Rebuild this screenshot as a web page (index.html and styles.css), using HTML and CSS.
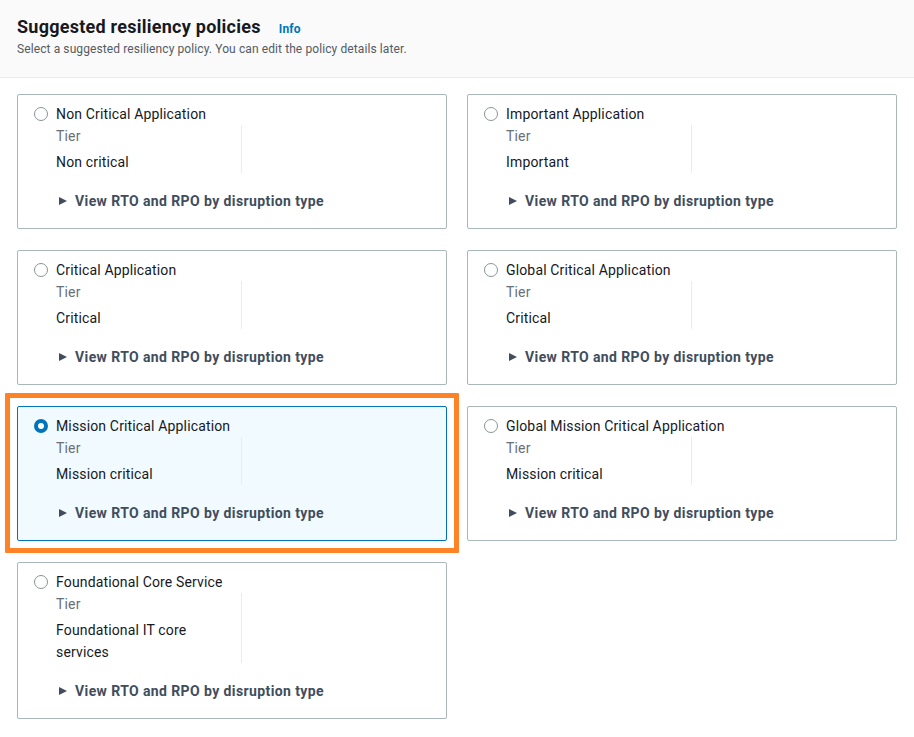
FILE: index.html
```html
<!DOCTYPE html>
<html>
<head>
<meta charset="utf-8">
<link rel="stylesheet" href="styles.css">
</head>
<body>
<header class="header">
  <div class="title-row">
    <h2 class="title">Suggested resiliency policies</h2>
    <a class="info">Info</a>
  </div>
  <p class="subtitle">Select a suggested resiliency policy. You can edit the policy details later.</p>
</header>
<main class="grid">
  <div class="card">
    <div class="card-head"><span class="radio"></span><span class="card-title">Non Critical Application</span></div>
    <div class="cols"><div class="col"><div class="label">Tier</div><div class="value">Non critical</div></div><div class="col"></div></div>
    <div class="expander"><span class="tri"></span>View RTO and RPO by disruption type</div>
  </div>
  <div class="card">
    <div class="card-head"><span class="radio"></span><span class="card-title">Important Application</span></div>
    <div class="cols"><div class="col"><div class="label">Tier</div><div class="value">Important</div></div><div class="col"></div></div>
    <div class="expander"><span class="tri"></span>View RTO and RPO by disruption type</div>
  </div>
  <div class="card">
    <div class="card-head"><span class="radio"></span><span class="card-title">Critical Application</span></div>
    <div class="cols"><div class="col"><div class="label">Tier</div><div class="value">Critical</div></div><div class="col"></div></div>
    <div class="expander"><span class="tri"></span>View RTO and RPO by disruption type</div>
  </div>
  <div class="card">
    <div class="card-head"><span class="radio"></span><span class="card-title">Global Critical Application</span></div>
    <div class="cols"><div class="col"><div class="label">Tier</div><div class="value">Critical</div></div><div class="col"></div></div>
    <div class="expander"><span class="tri"></span>View RTO and RPO by disruption type</div>
  </div>
  <div class="card selected">
    <div class="highlight"></div>
    <div class="card-head"><span class="radio checked"></span><span class="card-title">Mission Critical Application</span></div>
    <div class="cols"><div class="col"><div class="label">Tier</div><div class="value">Mission critical</div></div><div class="col"></div></div>
    <div class="expander"><span class="tri"></span>View RTO and RPO by disruption type</div>
  </div>
  <div class="card">
    <div class="card-head"><span class="radio"></span><span class="card-title">Global Mission Critical Application</span></div>
    <div class="cols"><div class="col"><div class="label">Tier</div><div class="value">Mission critical</div></div><div class="col"></div></div>
    <div class="expander"><span class="tri"></span>View RTO and RPO by disruption type</div>
  </div>
  <div class="card">
    <div class="card-head"><span class="radio"></span><span class="card-title">Foundational Core Service</span></div>
    <div class="cols"><div class="col"><div class="label">Tier</div><div class="value">Foundational IT core services</div></div><div class="col"></div></div>
    <div class="expander"><span class="tri"></span>View RTO and RPO by disruption type</div>
  </div>
</main>
</body>
</html>
```

FILE: styles.css
```css
* { box-sizing: border-box; }
html, body { margin: 0; padding: 0; background: #fff; }
body {
  font-family: Roboto, "Liberation Sans", sans-serif;
  color: #16191f;
  font-size: 14px;
  line-height: 22px;
  letter-spacing: 0.15px;
}
.header {
  background: #fafafa;
  border-bottom: 1px solid #e9ebed;
  padding: 15px 17px 20px;
  height: 78px;
}
.title-row { display: flex; align-items: baseline; gap: 18px; }
.title {
  margin: 0;
  font-size: 18px;
  line-height: 24px;
  font-weight: 700;
  color: #16191f;
  letter-spacing: 0.25px;
}
.info {
  font-size: 12px;
  font-weight: 700;
  color: #0073bb;
  text-decoration: none;
  letter-spacing: 0.2px;
}
.subtitle {
  margin: 1px 0 0;
  font-size: 12px;
  line-height: 16px;
  color: #545b64;
  letter-spacing: 0.1px;
}
.grid {
  display: grid;
  grid-template-columns: 430px 430px;
  gap: 21px 20px;
  padding: 16px 17px;
  align-items: start;
}
.card {
  position: relative;
  border: 1px solid #aab7b8;
  border-radius: 2px;
  padding: 8px 16px 16px;
  background: #fff;
}
.card.selected {
  background: #f1faff;
  border-color: #0073bb;
}
.highlight {
  position: absolute;
  top: -14px; left: -13px; right: -13px; bottom: -13px;
  border: 5px solid #ff8326;
  border-radius: 1px;
  pointer-events: none;
}
.card-head { display: flex; align-items: center; gap: 8px; }
.radio {
  width: 14px; height: 14px;
  border-radius: 50%;
  border: 1px solid #879596;
  background: #fff;
  flex: none;
}
.radio.checked { border: 4px solid #0073bb; }
.card-title { font-size: 14px; }
.cols {
  display: grid;
  grid-template-columns: 186px 186px;
  padding-left: 22px;
}
.col:first-child { border-right: 1px solid #eaeded; padding-right: 20px; }
.label { color: #687078; }
.value { margin-top: 4px; }
.expander {
  margin-top: 17px;
  padding-left: 41px;
  position: relative;
  font-weight: 700;
  color: #414d5c;
  letter-spacing: 0.4px;
}
.tri {
  position: absolute;
  left: 25px; top: 7px;
  width: 0; height: 0;
  border-left: 8px solid #414d5c;
  border-top: 4.5px solid transparent;
  border-bottom: 4.5px solid transparent;
}
```
